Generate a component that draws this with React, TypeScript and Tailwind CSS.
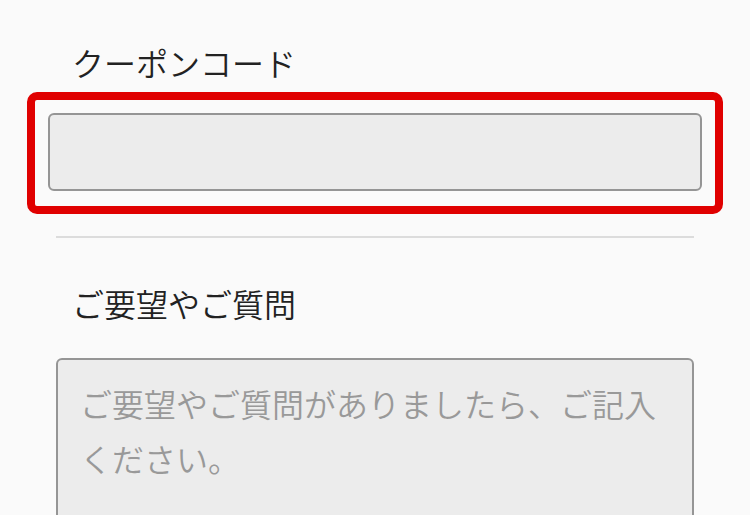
import React from "react";

const font = { fontFamily: '"Noto Sans CJK JP", "Noto Sans", sans-serif' };

export default function App() {
  return (
    <div
      className="w-[750px] h-[515px] overflow-hidden bg-[#fafafa] text-[#222] font-[350]"
      style={font}
    >
      <div className="mx-[56px] w-[638px] pt-[38px] flex flex-col">
        <label className="pl-[16px] text-[32px] leading-[48px] text-[#222]">
          クーポンコード
        </label>
        <div className="mt-[6px] ml-[-29px] w-[696px] h-[122px] border-[8px] border-[#e00000] rounded-[10px] pt-[13px] pl-[13px] pr-[13px]">
          <input
            type="text"
            className="w-[654px] h-[78px] bg-[#ececec] border-2 border-[#959595] rounded-[6px] px-[24px] text-[32px] outline-none"
          />
        </div>
        <div className="mt-[22px] h-[2px] bg-[#dcdcdc]" />
        <label className="mt-[41px] pl-[16px] text-[32px] leading-[48px] text-[#222]">
          ご要望やご質問
        </label>
        <textarea
          className="mt-[31px] w-[638px] h-[220px] bg-[#ececec] border-2 border-[#959595] rounded-[6px] pl-[22px] pr-[20px] pt-[16px] text-[32px] leading-[55px] font-[350] text-[#222] placeholder:text-[#999] resize-none outline-none"
          placeholder="ご要望やご質問がありましたら、ご記入ください。"
          style={font}
        />
      </div>
    </div>
  );
}
